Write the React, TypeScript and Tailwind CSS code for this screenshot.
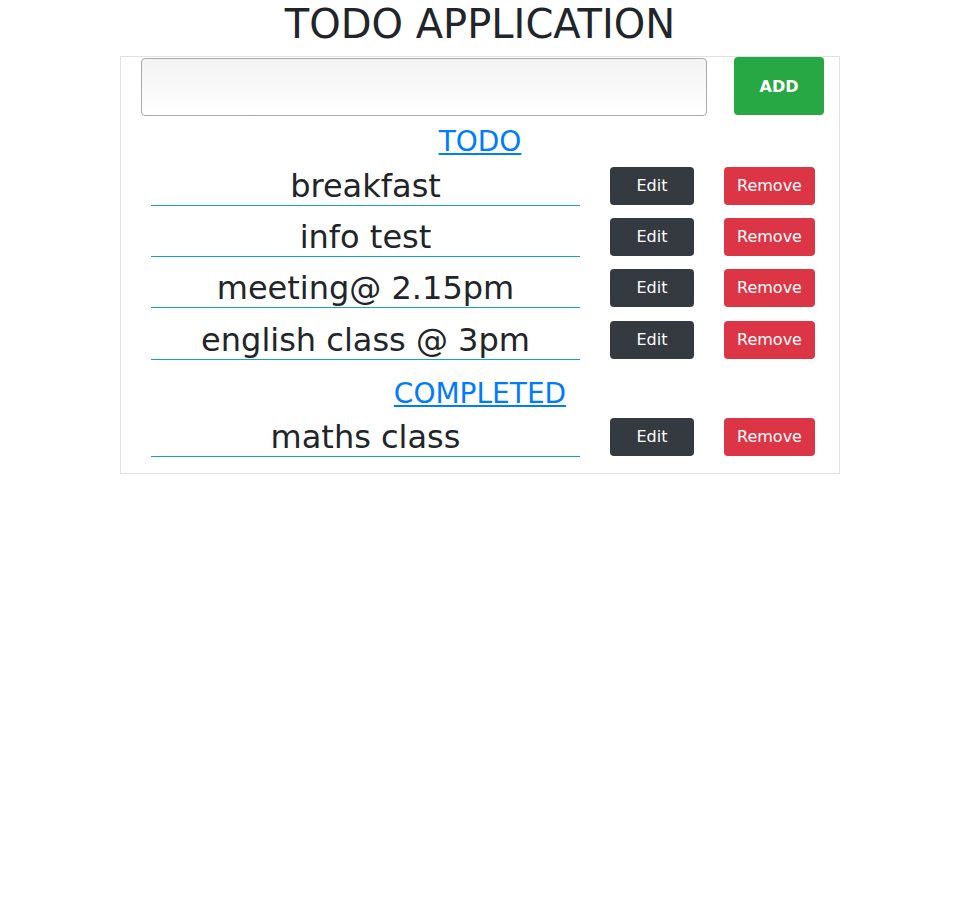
import React from "react";

const todos = ["breakfast", "info test", "meeting@ 2.15pm", "english class @ 3pm"];
const completed = ["maths class"];

function Row({ text, first }: { text: string; first?: boolean }) {
  return (
    <div className={`flex items-start pl-[30px] ${first ? "" : "mt-[12.33px]"}`}>
      <div className="w-[429px] h-[39px] border-b border-[#17a2b8] text-center text-[32px] leading-[38px] text-[#212529] whitespace-nowrap">
        {text}
      </div>
      <button className="ml-[30px] w-[84px] h-[38px] rounded bg-[#343a40] text-white text-[16px] leading-[24px]">
        Edit
      </button>
      <button className="ml-[30px] w-[91px] h-[38px] rounded bg-[#dc3545] text-white text-[16px] leading-[24px]">
        Remove
      </button>
    </div>
  );
}

export default function App() {
  return (
    <div className="min-h-[922px] bg-white text-[#212529] font-['DejaVu_Sans',sans-serif]">
      <h1 className="text-center text-[40px] leading-[48px] font-normal">TODO APPLICATION</h1>
      <div className="mx-auto mt-2 w-[720px] border border-[#dee2e6] pb-[16px]">
        <div className="flex items-start">
          <input
            className="ml-[20px] mt-[1px] w-[566px] h-[58px] rounded border border-[#aaaaaa] bg-gradient-to-b from-[#f3f3f3] to-white outline-none"
            type="text"
          />
          <button className="ml-[27px] w-[90px] h-[58px] pt-[2px] rounded bg-[#28a745] text-white font-bold text-[16px]">
            ADD
          </button>
        </div>
        <div className="mt-[9px] text-center text-[28px] leading-[33.6px] mb-2">
          <a href="#" className="text-[#007bff] underline">TODO</a>
        </div>
        {todos.map((t, i) => (
          <Row key={t} text={t} first={i === 0} />
        ))}
        <div className="mt-[17px] text-center text-[28px] leading-[33.6px] mb-2">
          <a href="#" className="text-[#007bff] underline">COMPLETED</a>
        </div>
        {completed.map((t, i) => (
          <Row key={t} text={t} first={i === 0} />
        ))}
      </div>
    </div>
  );
}
